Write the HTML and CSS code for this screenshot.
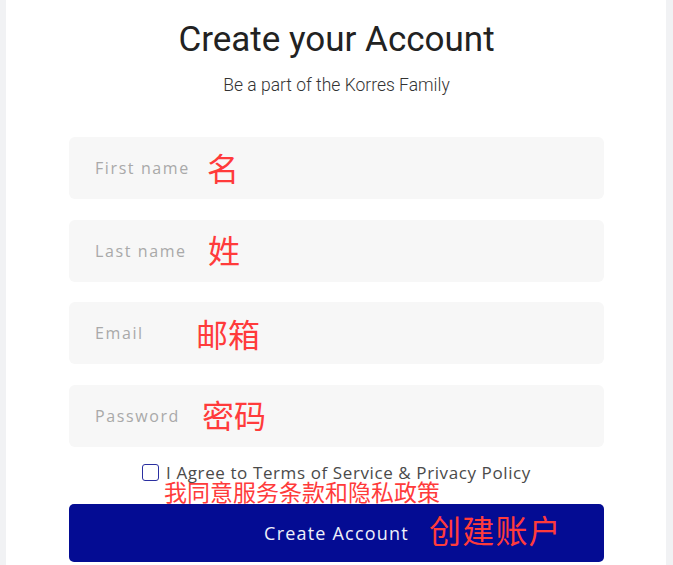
FILE: index.html
```html
<!DOCTYPE html>
<html lang="en">
<head>
<meta charset="utf-8">
<title>Create your Account</title>
<link rel="stylesheet" href="styles.css">
</head>
<body>
<div class="page">
  <div class="card">
    <h1 class="title">Create your Account</h1>
    <p class="subtitle">Be a part of the Korres Family</p>
    <form class="form">
      <div class="field">
        <input class="input" type="text" placeholder="First name">
        <span class="note note-first">名</span>
      </div>
      <div class="field">
        <input class="input" type="text" placeholder="Last name">
        <span class="note note-last">姓</span>
      </div>
      <div class="field">
        <input class="input" type="email" placeholder="Email">
        <span class="note note-email">邮箱</span>
      </div>
      <div class="field">
        <input class="input" type="password" placeholder="Password">
        <span class="note note-pass">密码</span>
      </div>
      <div class="agree">
        <label class="agree-label"><input class="check" type="checkbox"><span>I Agree to Terms of Service &amp; Privacy Policy</span></label>
        <span class="note note-agree">我同意服务条款和隐私政策</span>
      </div>
      <button class="submit" type="button">Create Account<span class="note note-btn">创建账户</span></button>
    </form>
  </div>
</div>
</body>
</html>
```

FILE: styles.css
```css
* { box-sizing: border-box; }
html, body { margin: 0; padding: 0; }
body {
  background: #f1f2f4;
  font-family: Roboto, "Liberation Sans", sans-serif;
  height: 565px;
  overflow: hidden;
}
.page {
  width: 660px;
  margin-left: 6px;
  min-height: 565px;
  background: #ffffff;
}
.card {
  padding: 20px 62px 0 63px;
  display: flex;
  flex-direction: column;
  align-items: stretch;
}
.title {
  margin: 0;
  text-align: center;
  font-family: Roboto, "Liberation Sans", sans-serif;
  font-weight: 400;
  font-size: 35px;
  line-height: 40px;
  color: #222222;
}
.subtitle {
  margin: 15px 0 0;
  text-align: center;
  font-family: Roboto, "Liberation Sans", sans-serif;
  font-weight: 300;
  font-size: 17.5px;
  line-height: 20px;
  color: #333333;
}
.form {
  margin-top: 42px;
  display: flex;
  flex-direction: column;
  gap: 20.6px;
}
.field { position: relative; }
.input {
  display: block;
  width: 100%;
  height: 62px;
  border: none;
  border-radius: 6px;
  background: #f7f7f7;
  padding: 0 26px;
  font-family: "Open Sans", sans-serif;
  font-size: 16px;
  letter-spacing: 1.6px;
  color: #333;
  outline: none;
}
.input::placeholder { color: #a9a9a9; }
.note {
  position: absolute;
  color: #ff3b3b;
  font-family: "Noto Sans CJK SC", sans-serif;
  font-size: 32px;
  line-height: 1;
  white-space: nowrap;
  pointer-events: none;
}
.note-first { left: 138px; top: 14px; }
.note-last { left: 139px; top: 13px; }
.note-email { left: 127px; top: 15px; }
.note-pass { left: 133px; top: 13px; }
.agree {
  position: relative;
  height: 24px;
  margin-top: -7px;
  display: flex;
  justify-content: center;
}
.agree-label {
  display: flex;
  align-items: center;
  gap: 7px;
  height: 24px;
  font-family: "Open Sans", sans-serif;
  font-size: 17px;
  letter-spacing: 0.6px;
  color: #4a4a4a;
  white-space: nowrap;
}
.check {
  margin: 0;
  width: 17px;
  height: 17px;
  appearance: none;
  border: 1.5px solid #2a2fa0;
  border-radius: 3px;
  background: #fff;
}
.note-agree {
  left: 95px;
  top: 20px;
  font-size: 23px;
}
.submit {
  position: relative;
  height: 58px;
  border: none;
  border-radius: 5px;
  background: #040c93;
  color: #eef0fa;
  font-family: "Open Sans", sans-serif;
  font-size: 18px;
  letter-spacing: 1.2px;
  cursor: pointer;
  margin-top: -1px;
}
.note-btn { left: 360px; top: 9px; }
```
